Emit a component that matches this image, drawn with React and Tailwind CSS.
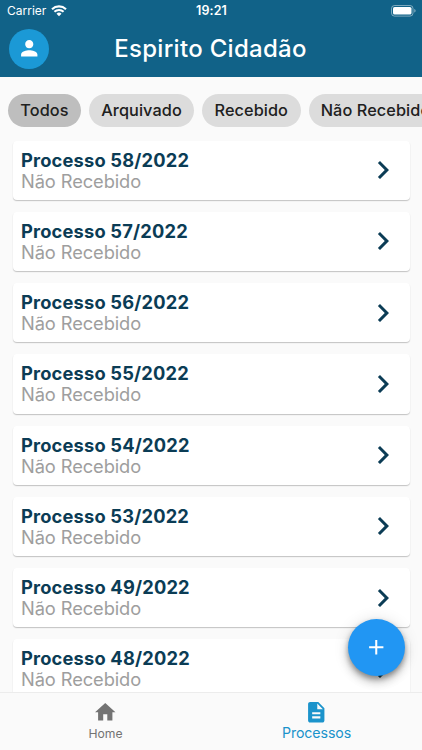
import React, { useState } from 'react'
import { MdAdd, MdChevronRight, MdDescription, MdHome, MdPerson } from 'react-icons/md'

const filters = [
  { label: 'Todos', width: 'w-[73px]' },
  { label: 'Arquivado', width: 'w-[105px]' },
  { label: 'Recebido', width: 'w-[98.5px]' },
  { label: 'Não Recebido', width: 'w-[134px]' },
]

const processos = ['58/2022', '57/2022', '56/2022', '55/2022', '54/2022', '53/2022', '49/2022', '48/2022']

const StatusBar = () => (
  <div className="flex h-[22px] items-center justify-between pl-[7px] pr-[6px] text-white">
    <div className="flex w-[120px] items-center gap-[5px]">
      <span className="text-[12px] leading-none">Carrier</span>
      <svg width="16" height="12" viewBox="0 0 16 12" fill="none" stroke="currentColor">
        <path d="M1 4.2a10.2 10.2 0 0 1 14 0" strokeWidth="2.1" />
        <path d="M3.4 6.8a6.7 6.7 0 0 1 9.2 0" strokeWidth="2" />
        <path d="M8 11.2 5.5 8.8a3.6 3.6 0 0 1 5 0z" fill="currentColor" stroke="none" />
      </svg>
    </div>
    <span className="text-[12.5px] font-semibold leading-none tracking-[0.1px]">19:21</span>
    <div className="flex w-[120px] justify-end">
      <svg width="25" height="12" viewBox="0 0 25 12">
        <rect x="0.5" y="0.5" width="21.5" height="10.6" rx="3" fill="none" stroke="#fff" strokeOpacity="0.45" />
        <rect x="2" y="2" width="18.5" height="7.6" rx="1.6" fill="#fff" />
        <path d="M23.3 4v3.6c.9-.3 1.3-1 1.3-1.8s-.4-1.500-1.300-1.800z" fill="#fff" fillOpacity="0.5" />
      </svg>
    </div>
  </div>
)

const ProcessoCard = ({ numero }) => (
  <div className="flex h-[59.25px] shrink-0 items-center justify-between rounded-[4px] bg-white px-[8.5px] shadow-[0_1px_1px_rgba(0,0,0,0.18),0_1px_2px_rgba(0,0,0,0.06)]">
    <div>
      <p className="text-[18.3px] font-bold leading-[22px] tracking-[0.18px] text-[#0b3c55]">Processo {numero}</p>
      <p className="text-[18.3px] leading-[21px] tracking-[-0.09px] text-[#9e9e9e]">Não Recebido</p>
    </div>
    <MdChevronRight className="size-[36px] text-[#0b3c55]" />
  </div>
)

const App = () => {
  const [active, setActive] = useState('Todos')

  return (
    <div className="relative flex h-[750px] w-[422px] flex-col overflow-hidden bg-[#fafafa] font-['Inter','Liberation_Sans',sans-serif]">
      <header className="h-[76.5px] shrink-0 bg-[#116288]">
        <StatusBar />
        <div className="grid grid-cols-[40px_1fr_40px] items-center px-[9px] pt-[6.5px]">
          <button className="flex size-10 items-center justify-center rounded-full bg-[#1b99d6] text-white">
            <MdPerson className="size-[24.5px]" />
          </button>
          <h1 className="pr-px text-center text-[24px] font-medium leading-[40px] tracking-[0.3px] text-white">Espirito Cidadão</h1>
        </div>
      </header>

      <div className="flex shrink-0 gap-2 overflow-x-auto pl-2 pt-[17.75px] [scrollbar-width:none]">
        {filters.map(({ label, width }) => (
          <button
            key={label}
            onClick={() => setActive(label)}
            className={`${width} h-[32.5px] shrink-0 whitespace-nowrap rounded-full pb-px text-[16.3px] font-[460] tracking-[0.08px] text-[#202020] ${active === label ? 'bg-[#bebebe]' : 'bg-[#dcdcdc]'}`}
          >
            {label}
          </button>
        ))}
      </div>

      <main className="mt-[13.75px] flex min-h-0 flex-1 flex-col gap-[12px] overflow-hidden px-[12.5px]">
        {processos.map(numero => (
          <ProcessoCard key={numero} numero={numero} />
        ))}
      </main>

      <button className="absolute left-[348px] top-[619px] flex size-[57px] items-center justify-center rounded-full bg-[#2196f3] text-white shadow-[0_3px_5px_rgba(0,0,0,0.3),0_6px_10px_rgba(0,0,0,0.2),0_1px_16px_rgba(0,0,0,0.12)]">
        <MdAdd className="size-[24.5px]" />
      </button>

      <nav className="relative grid h-[58px] shrink-0 grid-cols-2 border-t border-[#ececec] bg-[#fafafa]">
        <button className="flex flex-col items-center pt-[7px] text-[#737373]">
          <MdHome className="size-[24.5px]" />
          <span className="mt-[1.5px] text-[12.2px] leading-[16px]">Home</span>
        </button>
        <button className="flex flex-col items-center pt-[7px] text-[#1b93cb]">
          <MdDescription className="size-[24.5px]" />
          <span className="text-[14.2px] leading-[16px] tracking-[-0.1px]">Processos</span>
        </button>
      </nav>
    </div>
  )
}

export default App
